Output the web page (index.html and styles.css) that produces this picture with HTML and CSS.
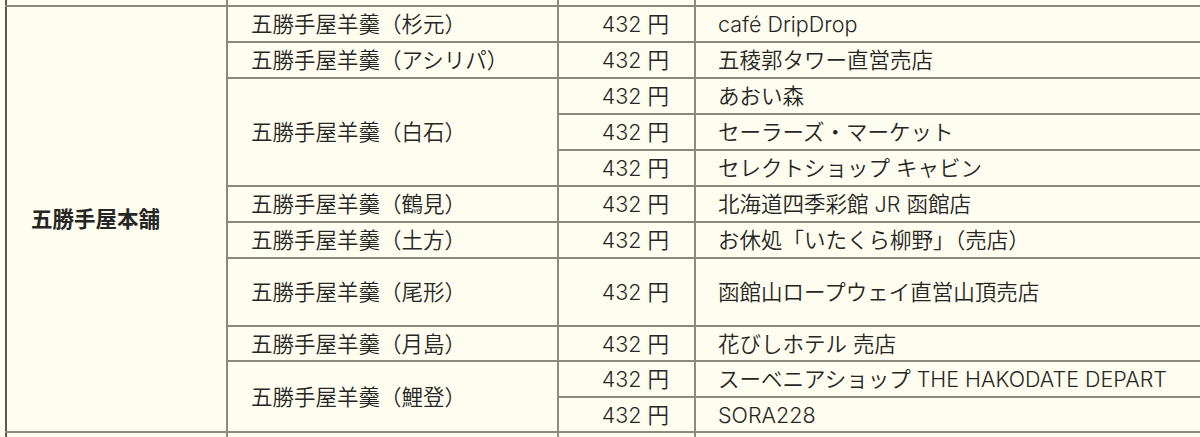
FILE: index.html
```html
<!DOCTYPE html>
<html lang="ja">
<head>
<meta charset="utf-8">
<title>五勝手屋羊羹 取扱店</title>
<link rel="stylesheet" href="styles.css">
</head>
<body>
<div class="wrap">
<table class="price">
  <colgroup>
    <col class="c-maker">
    <col class="c-item">
    <col class="c-price">
    <col class="c-shop">
  </colgroup>
  <tbody>
    <tr class="stub stub-top"><td></td><td></td><td></td><td></td></tr>
    <tr class="group-top">
      <td class="maker" rowspan="11">五勝手屋本舗</td>
      <td class="item">五勝手屋羊羹（杉元）</td>
      <td class="price-cell">432 円</td>
      <td class="shop">café DripDrop</td>
    </tr>
    <tr>
      <td class="item">五勝手屋羊羹（アシリパ）</td>
      <td class="price-cell">432 円</td>
      <td class="shop">五稜郭タワー直営売店</td>
    </tr>
    <tr>
      <td class="item" rowspan="3">五勝手屋羊羹（白石）</td>
      <td class="price-cell">432 円</td>
      <td class="shop">あおい森</td>
    </tr>
    <tr>
      <td class="price-cell">432 円</td>
      <td class="shop">セーラーズ・マーケット</td>
    </tr>
    <tr>
      <td class="price-cell">432 円</td>
      <td class="shop">セレクトショップ キャビン</td>
    </tr>
    <tr>
      <td class="item">五勝手屋羊羹（鶴見）</td>
      <td class="price-cell">432 円</td>
      <td class="shop">北海道四季彩館 JR 函館店</td>
    </tr>
    <tr>
      <td class="item">五勝手屋羊羹（土方）</td>
      <td class="price-cell">432 円</td>
      <td class="shop">お休処「いたくら柳野」（売店）</td>
    </tr>
    <tr class="tall">
      <td class="item">五勝手屋羊羹（尾形）</td>
      <td class="price-cell">432 円</td>
      <td class="shop">函館山ロープウェイ直営山頂売店</td>
    </tr>
    <tr class="short">
      <td class="item">五勝手屋羊羹（月島）</td>
      <td class="price-cell">432 円</td>
      <td class="shop">花びしホテル 売店</td>
    </tr>
    <tr>
      <td class="item" rowspan="2">五勝手屋羊羹（鯉登）</td>
      <td class="price-cell">432 円</td>
      <td class="shop">スーベニアショップ THE HAKODATE DEPART</td>
    </tr>
    <tr class="short">
      <td class="price-cell">432 円</td>
      <td class="shop">SORA228</td>
    </tr>
    <tr class="stub stub-bottom group-top"><td></td><td></td><td></td><td></td></tr>
  </tbody>
</table>
</div>
</body>
</html>
```

FILE: styles.css
```css
html, body {
  margin: 0;
  padding: 0;
  background: #fffdf0;
  overflow: hidden;
}

body {
  font-family: "Inter", "Noto Sans CJK JP", sans-serif;
  color: #262624;
  font-size: 21.5px;
}

.wrap {
  padding-left: 5px;
  width: 1240px;
}

.price {
  border-collapse: collapse;
  table-layout: fixed;
  width: 1230px;
}

.c-maker { width: 221px; }
.c-item { width: 331px; }
.c-price { width: 137px; }
.c-shop { width: 541px; }

.price td {
  border: 2px solid #8a8a7e;
  height: 34px;
  padding: 0 0 0 23px;
  line-height: 30px;
  white-space: nowrap;
  vertical-align: middle;
  font-weight: 350;
}

.price td:first-child {
  border-left: 2px solid #5a5a52;
}

.price tr.stub td {
  padding: 0;
  line-height: 0;
  font-size: 0;
}

.price tr.stub-top td {
  height: 5px;
  border-top: 0 none;
}

.price tr.stub-bottom td {
  height: 12px;
  border-bottom: 0 none;
}

.price tr.group-top td {
  border-top: 2px solid #5e5e56;
}

.price tr.tall td {
  height: 66px;
}

.price tr.short td {
  height: 33px;
}

.price td.maker {
  font-weight: 700;
  padding-left: 24px;
}

.price td.price-cell {
  text-align: right;
  padding: 0 25px 0 0;
}

.price td.shop {
  padding-left: 22px;
}
```
